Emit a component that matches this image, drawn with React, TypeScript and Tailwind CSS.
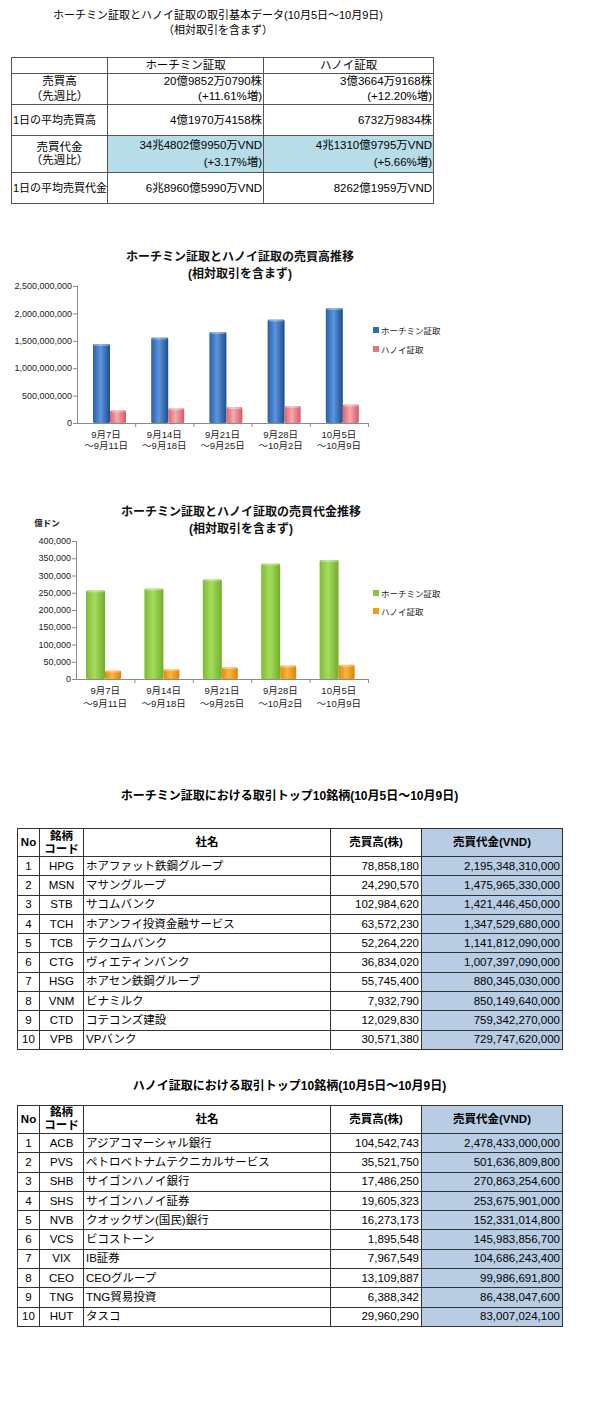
import React from 'react'

const FONT = "font-['Liberation_Sans','Noto_Sans_CJK_JP',sans-serif]"

type Series = {
    name: string
    values: number[]
    stops: [string, string, string]
    legend: string
}

type ChartProps = {
    id: string
    title: [string, string]
    titleX: number
    height: number
    top: number
    bottom: number
    axisX: number
    endX: number
    max: number
    step: number
    fmt: (v: number) => string
    offsets: [number, number]
    widths: [number, number]
    labelY: [number, number]
    legendY: [number, number]
    unit?: string
    series: [Series, Series]
}

const WEEKS: [string, string][] = [
    ['9月7日', '～9月11日'],
    ['9月14日', '～9月18日'],
    ['9月21日', '～9月25日'],
    ['9月28日', '～10月2日'],
    ['10月5日', '～10月9日'],
]

function BarChart(p: ChartProps) {
    const plotH = p.bottom - p.top
    const catW = (p.endX - p.axisX) / WEEKS.length
    const ticks: number[] = []
    for (let v = 0; v <= p.max; v += p.step) ticks.push(v)
    const yOf = (v: number) => p.bottom - (v / p.max) * plotH

    return (
        <svg width={470} height={p.height} className="block">
            <defs>
                {p.series.map((s, i) => (
                    <linearGradient key={i} id={`${p.id}-g${i}`} x1="0" x2="1" y1="0" y2="0">
                        <stop offset="0" stopColor={s.stops[0]} />
                        <stop offset="0.45" stopColor={s.stops[1]} />
                        <stop offset="1" stopColor={s.stops[2]} />
                    </linearGradient>
                ))}
            </defs>

            {/* title */}
            <text x={p.titleX} y={19.5} textAnchor="middle" fontSize={12} fontWeight={700} fill="#111">
                {p.title[0]}
            </text>
            <text x={p.titleX} y={36.5} textAnchor="middle" fontSize={12} fontWeight={700} fill="#111">
                {p.title[1]}
            </text>
            {p.unit && (
                <text x={47} y={30} textAnchor="middle" fontSize={8.5} fontWeight={700} fill="#111">
                    {p.unit}
                </text>
            )}

            {/* y axis */}
            <line x1={p.axisX + 0.5} x2={p.axisX + 0.5} y1={p.top} y2={p.bottom} stroke="#8a8a8a" />
            {ticks.map((v) => (
                <g key={v}>
                    <line x1={p.axisX - 4} x2={p.axisX} y1={yOf(v) + 0.5} y2={yOf(v) + 0.5} stroke="#8a8a8a" />
                    <text x={p.axisX - 5} y={yOf(v) + 3.2} textAnchor="end" fontSize={9} fill="#222">
                        {p.fmt(v)}
                    </text>
                </g>
            ))}

            {/* x axis */}
            <line x1={p.axisX} x2={p.endX} y1={p.bottom + 0.5} y2={p.bottom + 0.5} stroke="#8a8a8a" />
            {WEEKS.map((_, i) => (
                <line
                    key={i}
                    x1={p.axisX + catW * (i + 1) + 0.5}
                    x2={p.axisX + catW * (i + 1) + 0.5}
                    y1={p.bottom}
                    y2={p.bottom + 4}
                    stroke="#8a8a8a"
                />
            ))}

            {/* bars */}
            {WEEKS.map((w, i) => {
                const x0 = p.axisX + catW * i
                return (
                    <g key={i}>
                        {p.series.map((s, j) => {
                            const y = yOf(s.values[i])
                            const bx = x0 + p.offsets[j]
                            return (
                                <g key={j}>
                                    <rect
                                        x={bx}
                                        y={y}
                                        width={p.widths[j]}
                                        height={p.bottom - y}
                                        rx={1.5}
                                        fill={`url(#${p.id}-g${j})`}
                                    />
                                    <rect x={bx + 1} y={y} width={p.widths[j] - 2} height={2} rx={1} fill="#fff" opacity={0.35} />
                                </g>
                            )
                        })}
                        <text x={x0 + catW / 2} y={p.labelY[0]} textAnchor="middle" fontSize={9.5} fill="#222">
                            {w[0]}
                        </text>
                        <text x={x0 + catW / 2} y={p.labelY[1]} textAnchor="middle" fontSize={9.5} fill="#222">
                            {w[1]}
                        </text>
                    </g>
                )
            })}

            {/* legend */}
            {p.series.map((s, j) => (
                <g key={j}>
                    <rect x={373} y={p.legendY[j] - 3} width={6} height={6} fill={s.legend} />
                    <text x={381} y={p.legendY[j] + 3.5} fontSize={8.5} fill="#222">
                        {s.name}
                    </text>
                </g>
            ))}
        </svg>
    )
}

const num = (v: number) => v.toLocaleString('en-US')

type StockRow = [number, string, string, string, string]

const HCM_TOP: StockRow[] = [
    [1, 'HPG', 'ホアファット鉄鋼グループ', '78,858,180', '2,195,348,310,000'],
    [2, 'MSN', 'マサングループ', '24,290,570', '1,475,965,330,000'],
    [3, 'STB', 'サコムバンク', '102,984,620', '1,421,446,450,000'],
    [4, 'TCH', 'ホアンフイ投資金融サービス', '63,572,230', '1,347,529,680,000'],
    [5, 'TCB', 'テクコムバンク', '52,264,220', '1,141,812,090,000'],
    [6, 'CTG', 'ヴィエティンバンク', '36,834,020', '1,007,397,090,000'],
    [7, 'HSG', 'ホアセン鉄鋼グループ', '55,745,400', '880,345,030,000'],
    [8, 'VNM', 'ビナミルク', '7,932,790', '850,149,640,000'],
    [9, 'CTD', 'コテコンズ建設', '12,029,830', '759,342,270,000'],
    [10, 'VPB', 'VPバンク', '30,571,380', '729,747,620,000'],
]

const HN_TOP: StockRow[] = [
    [1, 'ACB', 'アジアコマーシャル銀行', '104,542,743', '2,478,433,000,000'],
    [2, 'PVS', 'ペトロベトナムテクニカルサービス', '35,521,750', '501,636,809,800'],
    [3, 'SHB', 'サイゴンハノイ銀行', '17,486,250', '270,863,254,600'],
    [4, 'SHS', 'サイゴンハノイ証券', '19,605,323', '253,675,901,000'],
    [5, 'NVB', 'クオックザン(国民)銀行', '16,273,173', '152,331,014,800'],
    [6, 'VCS', 'ビコストーン', '1,895,548', '145,983,856,700'],
    [7, 'VIX', 'IB証券', '7,967,549', '104,686,243,400'],
    [8, 'CEO', 'CEOグループ', '13,109,887', '99,986,691,800'],
    [9, 'TNG', 'TNG貿易投資', '6,388,342', '86,438,047,600'],
    [10, 'HUT', 'タスコ', '29,960,290', '83,007,024,100'],
]

function TopTable({ rows }: { rows: StockRow[] }) {
    return (
        <table className="ml-[17px] table-fixed border-collapse text-[11.5px] text-black">
            <colgroup>
                <col className="w-[22px]" />
                <col className="w-[44px]" />
                <col className="w-[247px]" />
                <col className="w-[91px]" />
                <col className="w-[141px]" />
            </colgroup>
            <thead>
                <tr className="h-[28px] font-bold">
                    <th className="border border-[#333] p-0 text-center">No</th>
                    <th className="border border-[#333] p-0 text-center leading-[13px]">
                        銘柄
                        <br />
                        コード
                    </th>
                    <th className="border border-[#333] p-0 text-center">社名</th>
                    <th className="border border-[#333] p-0 text-center">売買高(株)</th>
                    <th className="border border-[#333] bg-[#b8cce4] p-0 text-center">売買代金(VND)</th>
                </tr>
            </thead>
            <tbody>
                {rows.map((r) => (
                    <tr key={r[0]} className="h-[19.3px] leading-[17px]">
                        <td className="border border-[#333] p-0 text-center">{r[0]}</td>
                        <td className="border border-[#333] p-0 text-center">{r[1]}</td>
                        <td className="border border-[#333] py-0 pl-[2px] whitespace-nowrap">{r[2]}</td>
                        <td className="border border-[#333] py-0 pr-[2px] text-right">{r[3]}</td>
                        <td className="border border-[#333] bg-[#b8cce4] py-0 pr-[2px] text-right">{r[4]}</td>
                    </tr>
                ))}
            </tbody>
        </table>
    )
}

export default function App() {
    const cell = 'border border-[#555] p-0'
    return (
        <div className={`${FONT} min-h-[1408px] w-[600px] bg-white text-black`}>
            {/* basic data */}
            <div className="w-[436px] pt-[8px] text-center text-[11px] leading-[15px]">
                <p>ホーチミン証取とハノイ証取の取引基本データ(10月5日～10月9日)</p>
                <p>（相対取引を含まず）</p>
            </div>

            <table className="mt-[19px] ml-[11px] table-fixed border-collapse text-[11.5px] leading-[15px]">
                <colgroup>
                    <col className="w-[94px]" />
                    <col className="w-[156px]" />
                    <col className="w-[170px]" />
                </colgroup>
                <tbody>
                    <tr className="h-[14px]">
                        <td className={cell}></td>
                        <td className={`${cell} text-center`}>ホーチミン証取</td>
                        <td className={`${cell} text-center`}>ハノイ証取</td>
                    </tr>
                    <tr className="h-[31px]">
                        <td className={`${cell} text-center`}>
                            売買高
                            <br />
                            （先週比）
                        </td>
                        <td className={`${cell} pr-[1px] text-right`}>
                            20億9852万0790株
                            <br />
                            (+11.61%増)
                        </td>
                        <td className={`${cell} pr-[1px] text-right`}>
                            3億3664万9168株
                            <br />
                            (+12.20%増)
                        </td>
                    </tr>
                    <tr className="h-[31px]">
                        <td className={`${cell} whitespace-nowrap pl-[1px] text-[11px]`}>1日の平均売買高</td>
                        <td className={`${cell} pr-[1px] text-right`}>4億1970万4158株</td>
                        <td className={`${cell} pr-[1px] text-right`}>6732万9834株</td>
                    </tr>
                    <tr className="h-[37px]">
                        <td className={`${cell} text-center leading-[13px]`}>
                            売買代金
                            <br />
                            （先週比）
                        </td>
                        <td className={`${cell} bg-[#b7dde8] pr-[1px] text-right leading-[17px]`}>
                            34兆4802億9950万VND
                            <br />
                            (+3.17%増)
                        </td>
                        <td className={`${cell} bg-[#b7dde8] pr-[1px] text-right leading-[17px]`}>
                            4兆1310億9795万VND
                            <br />
                            (+5.66%増)
                        </td>
                    </tr>
                    <tr className="h-[31px]">
                        <td className={`${cell} whitespace-nowrap pl-[1px] text-[11px]`}>1日の平均売買代金</td>
                        <td className={`${cell} pr-[1px] text-right`}>6兆8960億5990万VND</td>
                        <td className={`${cell} pr-[1px] text-right`}>8262億1959万VND</td>
                    </tr>
                </tbody>
            </table>

            {/* volume chart */}
            <div className="mt-[37px]">
                <BarChart
                    id="vol"
                    title={['ホーチミン証取とハノイ証取の売買高推移', '(相対取引を含まず)']}
                    titleX={240}
                    height={220}
                    top={45}
                    bottom={182}
                    axisX={77}
                    endX={368}
                    max={2500000000}
                    step={500000000}
                    fmt={num}
                    offsets={[16, 33]}
                    widths={[17, 16]}
                    labelY={[196.5, 207.5]}
                    legendY={[89, 108]}
                    series={[
                        {
                            name: 'ホーチミン証取',
                            values: [1440000000, 1560000000, 1660000000, 1890000000, 2098520790],
                            stops: ['#2d5ea8', '#5a96de', '#1f4c8c'],
                            legend: '#3468b8',
                        },
                        {
                            name: 'ハノイ証取',
                            values: [232000000, 270000000, 290000000, 310000000, 336649168],
                            stops: ['#d9676e', '#f6a9ad', '#d35a62'],
                            legend: '#e5767d',
                        },
                    ]}
                />
            </div>

            {/* value chart */}
            <div className="mt-[35px]">
                <BarChart
                    id="val"
                    title={['ホーチミン証取とハノイ証取の売買代金推移', '(相対取引を含まず)']}
                    titleX={241}
                    height={215}
                    top={45}
                    bottom={183}
                    axisX={76}
                    endX={368}
                    max={400000}
                    step={50000}
                    fmt={num}
                    offsets={[10, 29]}
                    widths={[19, 16]}
                    labelY={[197.5, 210.5]}
                    legendY={[97, 115]}
                    unit="億ドン"
                    series={[
                        {
                            name: 'ホーチミン証取',
                            values: [257000, 262000, 289000, 335000, 344803],
                            stops: ['#7fbb35', '#a6dc5e', '#72ad2a'],
                            legend: '#8cc63f',
                        },
                        {
                            name: 'ハノイ証取',
                            values: [25000, 28000, 34000, 39000, 41311],
                            stops: ['#e48a10', '#fbb43c', '#e08208'],
                            legend: '#f29a1a',
                        },
                    ]}
                />
            </div>

            {/* HCM top 10 */}
            <p className="mt-[77px] w-[579px] text-center text-[12px] font-bold leading-[16px]">
                ホーチミン証取における取引トップ10銘柄(10月5日～10月9日)
            </p>
            <div className="mt-[24px]">
                <TopTable rows={HCM_TOP} />
            </div>

            {/* HN top 10 */}
            <p className="mt-[28px] w-[579px] text-center text-[12px] font-bold leading-[16px]">
                ハノイ証取における取引トップ10銘柄(10月5日～10月9日)
            </p>
            <div className="mt-[11px]">
                <TopTable rows={HN_TOP} />
            </div>
        </div>
    )
}
